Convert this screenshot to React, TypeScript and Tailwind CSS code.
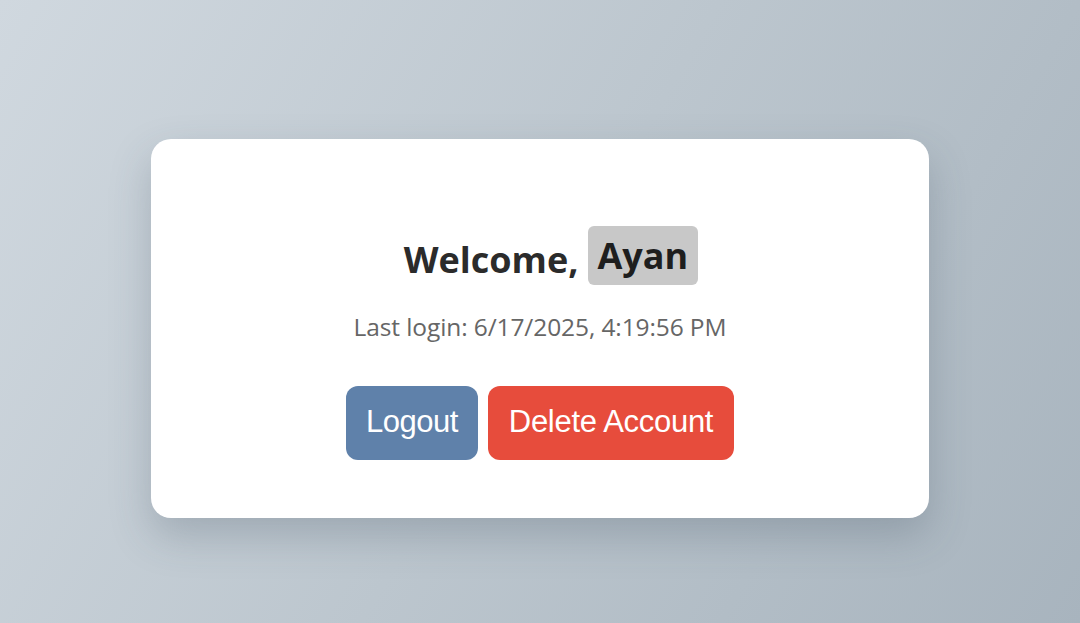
const App: React.FC = () => {
  return (
    <div className="min-h-[623px] w-full flex items-center justify-center pt-[34px] bg-[linear-gradient(120deg,#d0d8df_0%,#bcc6ce_50%,#a8b4be_100%)]">
      <div className="w-[778px] h-[379px] bg-white rounded-[20px] shadow-[0_18px_40px_rgba(60,75,90,0.25)] flex flex-col items-center pt-[87px]">
        <h2
          className="flex items-center pl-[22px] text-[36px] font-bold text-[#2b2b2b] leading-none"
          style={{ fontFamily: '"Open Sans", "Noto Sans", sans-serif' }}
        >
          <span className="mt-[8px]">Welcome,</span>
          <span className="ml-[9px] h-[59px] px-[10px] flex items-center bg-[#c8c8c8] rounded-[6px] text-[#1e1e1e]">
            Ayan
          </span>
        </h2>
        <p
          className="mt-[30px] text-[24.5px] text-[#666] leading-none tracking-[-0.1px]"
          style={{ fontFamily: '"Open Sans", "Noto Sans", sans-serif' }}
        >
          Last login: 6/17/2025, 4:19:56 PM
        </p>
        <div
          className="mt-[46px] flex gap-[10px]"
          style={{ fontFamily: '"Liberation Sans", Arial, sans-serif' }}
        >
          <button className="h-[74px] w-[132px] rounded-[12px] bg-[#5f81aa] text-white text-[31px] tracking-[-0.5px]">
            Logout
          </button>
          <button className="h-[74px] w-[246px] rounded-[12px] bg-[#e74c3c] text-white text-[31px] tracking-[-0.3px]">
            Delete Account
          </button>
        </div>
      </div>
    </div>
  );
};

export default App;
